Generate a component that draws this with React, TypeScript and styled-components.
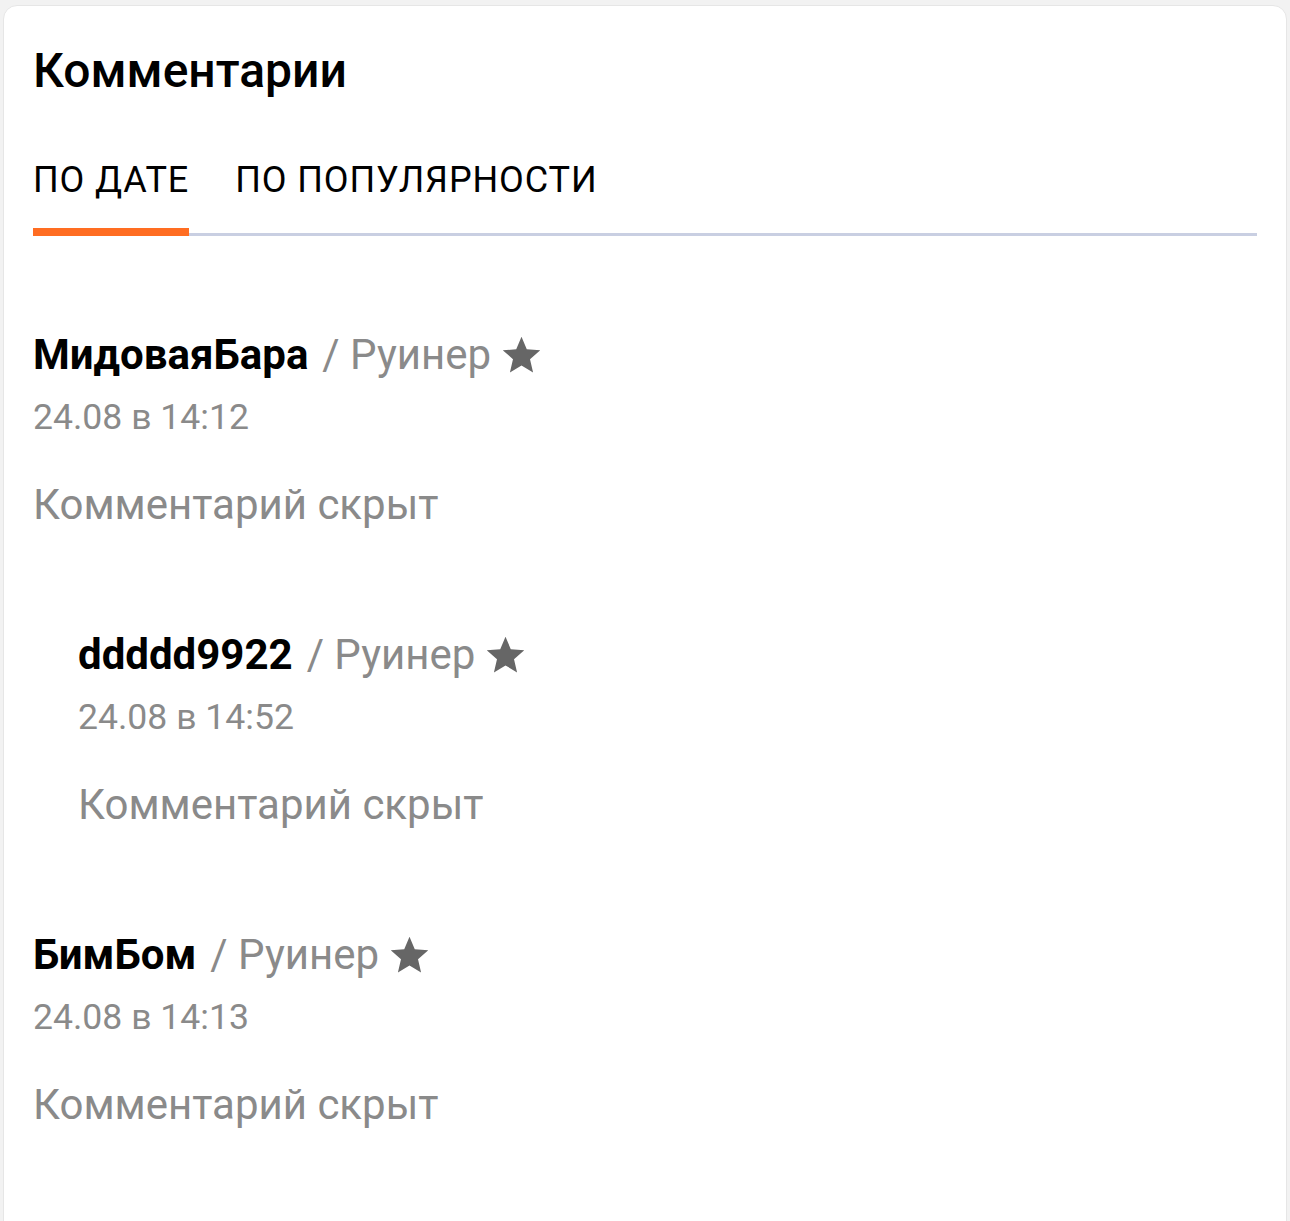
import React from "react";
import styled, { createGlobalStyle } from "styled-components";

const GlobalStyle = createGlobalStyle`
  html, body {
    margin: 0;
    padding: 0;
    background: #f2f2f2;
  }
  body {
    font-family: Roboto, "Noto Sans", "Liberation Sans", sans-serif;
    -webkit-font-smoothing: antialiased;
  }
  * { box-sizing: border-box; }
`;

const Page = styled.div`
  padding: 5px 3px 0 3px;
`;

const Card = styled.section`
  background: #ffffff;
  border: 1px solid #e6e6e6;
  border-radius: 14px;
  padding: 37px 29px 120px 29px;
`;

const Title = styled.h2`
  margin: 0;
  font-size: 48px;
  line-height: 56px;
  font-weight: 500;
  color: #000;
`;

const Tabs = styled.div`
  position: relative;
  display: flex;
  gap: 46px;
  margin-top: 59px;
  &::after {
    content: "";
    position: absolute;
    left: 0;
    right: 0;
    bottom: 0;
    height: 3px;
    background: #c9cfe2;
  }
`;

const Tab = styled.div<{ $active?: boolean }>`
  position: relative;
  z-index: 1;
  font-size: 36px;
  line-height: 44px;
  font-weight: 400;
  letter-spacing: 0.9px;
  color: #000;
  text-transform: uppercase;
  padding-bottom: 26px;
  border-bottom: 8px solid ${(p) => (p.$active ? "#ff6d22" : "transparent")};
`;

const List = styled.div`
  display: flex;
  flex-direction: column;
  gap: 100px;
  padding-top: 94px;
`;

const Comment = styled.article<{ $nested?: boolean }>`
  margin-left: ${(p) => (p.$nested ? "45px" : "0")};
`;

const Head = styled.div`
  display: flex;
  align-items: center;
  height: 50px;
`;

const Name = styled.span`
  font-size: 42px;
  line-height: 50px;
  font-weight: 700;
  color: #000;
`;

const Role = styled.span`
  font-size: 42px;
  line-height: 50px;
  font-weight: 400;
  color: #8a8a8a;
  margin-left: 14px;
`;

const Star = styled.svg`
  width: 45px;
  height: 45px;
  margin-left: 8px;
  fill: #666666;
  flex: none;
`;

const Date = styled.div`
  margin-top: 16px;
  font-size: 35.6px;
  line-height: 42px;
  color: #8a8a8a;
`;

const Body = styled.p`
  margin: 42px 0 0 0;
  font-size: 42px;
  line-height: 50px;
  color: #8a8a8a;
`;

type Item = { name: string; date: string; nested?: boolean };

const items: Item[] = [
  { name: "МидоваяБара", date: "24.08 в 14:12" },
  { name: "ddddd9922", date: "24.08 в 14:52", nested: true },
  { name: "БимБом", date: "24.08 в 14:13" },
];

export default function App() {
  return (
    <Page>
      <GlobalStyle />
      <Card>
        <Title>Комментарии</Title>
        <Tabs>
          <Tab $active>По дате</Tab>
          <Tab>По популярности</Tab>
        </Tabs>
        <List>
          {items.map((it) => (
            <Comment key={it.name} $nested={it.nested}>
              <Head>
                <Name>{it.name}</Name>
                <Role>/ Руинер</Role>
                <Star viewBox="0 0 24 24" aria-hidden="true">
                  <path d="M12 17.27L18.18 21l-1.64-7.03L22 9.24l-7.19-.61L12 2 9.19 8.63 2 9.24l5.46 4.73L5.82 21z" />
                </Star>
              </Head>
              <Date>{it.date}</Date>
              <Body>Комментарий скрыт</Body>
            </Comment>
          ))}
        </List>
      </Card>
    </Page>
  );
}
